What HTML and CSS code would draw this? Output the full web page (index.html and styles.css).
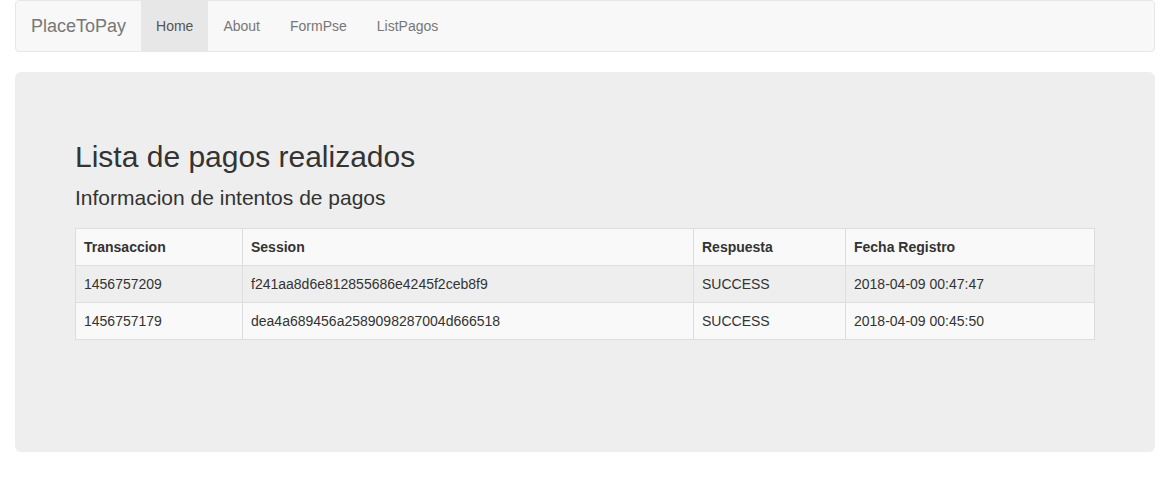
FILE: index.html
```html
<!DOCTYPE html>
<html lang="es">
<head>
<meta charset="utf-8">
<title>PlaceToPay</title>
<link rel="stylesheet" href="styles.css">
</head>
<body>
<div class="page">
  <nav class="navbar">
    <a class="brand" href="#">PlaceToPay</a>
    <ul class="nav">
      <li class="active"><a href="#">Home</a></li>
      <li><a href="#">About</a></li>
      <li><a href="#">FormPse</a></li>
      <li><a href="#">ListPagos</a></li>
    </ul>
  </nav>
  <div class="jumbotron">
    <h2 class="title">Lista de pagos realizados</h2>
    <p class="lead">Informacion de intentos de pagos</p>
    <table class="table">
      <thead>
        <tr><th class="c1">Transaccion</th><th class="c2">Session</th><th class="c3">Respuesta</th><th>Fecha Registro</th></tr>
      </thead>
      <tbody>
        <tr class="odd"><td>1456757209</td><td>f241aa8d6e812855686e4245f2ceb8f9</td><td>SUCCESS</td><td>2018-04-09 00:47:47</td></tr>
        <tr class="even"><td>1456757179</td><td>dea4a689456a2589098287004d666518</td><td>SUCCESS</td><td>2018-04-09 00:45:50</td></tr>
      </tbody>
    </table>
  </div>
</div>
</body>
</html>
```
FILE: styles.css
```css
* { box-sizing: border-box; }
html, body { margin: 0; padding: 0; background: #fff; }
body {
  font-family: "Liberation Sans", Arial, sans-serif;
  font-size: 14px;
  line-height: 1.42857143;
  color: #333;
}
.page { padding: 0 15px; }
.navbar {
  display: flex;
  height: 52px;
  background: #f8f8f8;
  border: 1px solid #e7e7e7;
  border-radius: 4px;
  margin-bottom: 20px;
}
.brand {
  display: block;
  height: 50px;
  padding: 15px;
  font-size: 18px;
  line-height: 20px;
  color: #777;
  text-decoration: none;
}
.nav { display: flex; list-style: none; margin: 0; padding: 0; }
.nav a {
  display: block;
  padding: 15px;
  line-height: 20px;
  color: #777;
  text-decoration: none;
}
.nav .active a { background: #e7e7e7; color: #555; }
.jumbotron {
  background: #eee;
  border-radius: 6px;
  padding: 48px 60px 48px;
  height: 380px;
}
.title {
  margin: 20px 0 10px;
  font-size: 30px;
  font-weight: 500;
  line-height: 1.1;
}
.lead {
  margin: 0 0 15px;
  font-size: 21px;
  font-weight: 200;
  line-height: 30px;
}
.table {
  width: 100%;
  border-collapse: collapse;
  border-spacing: 0;
}
.table th, .table td {
  border: 1px solid #ddd;
  padding: 8px;
  line-height: 20px;
  text-align: left;
  vertical-align: top;
}
.table th { font-weight: bold; }
.table thead tr { background: #f9f9f9; }
.table .odd { background: #eee; }
.table .even { background: #f9f9f9; }
.c1 { width: 167px; }
.c2 { width: 451px; }
.c3 { width: 152px; }
```
